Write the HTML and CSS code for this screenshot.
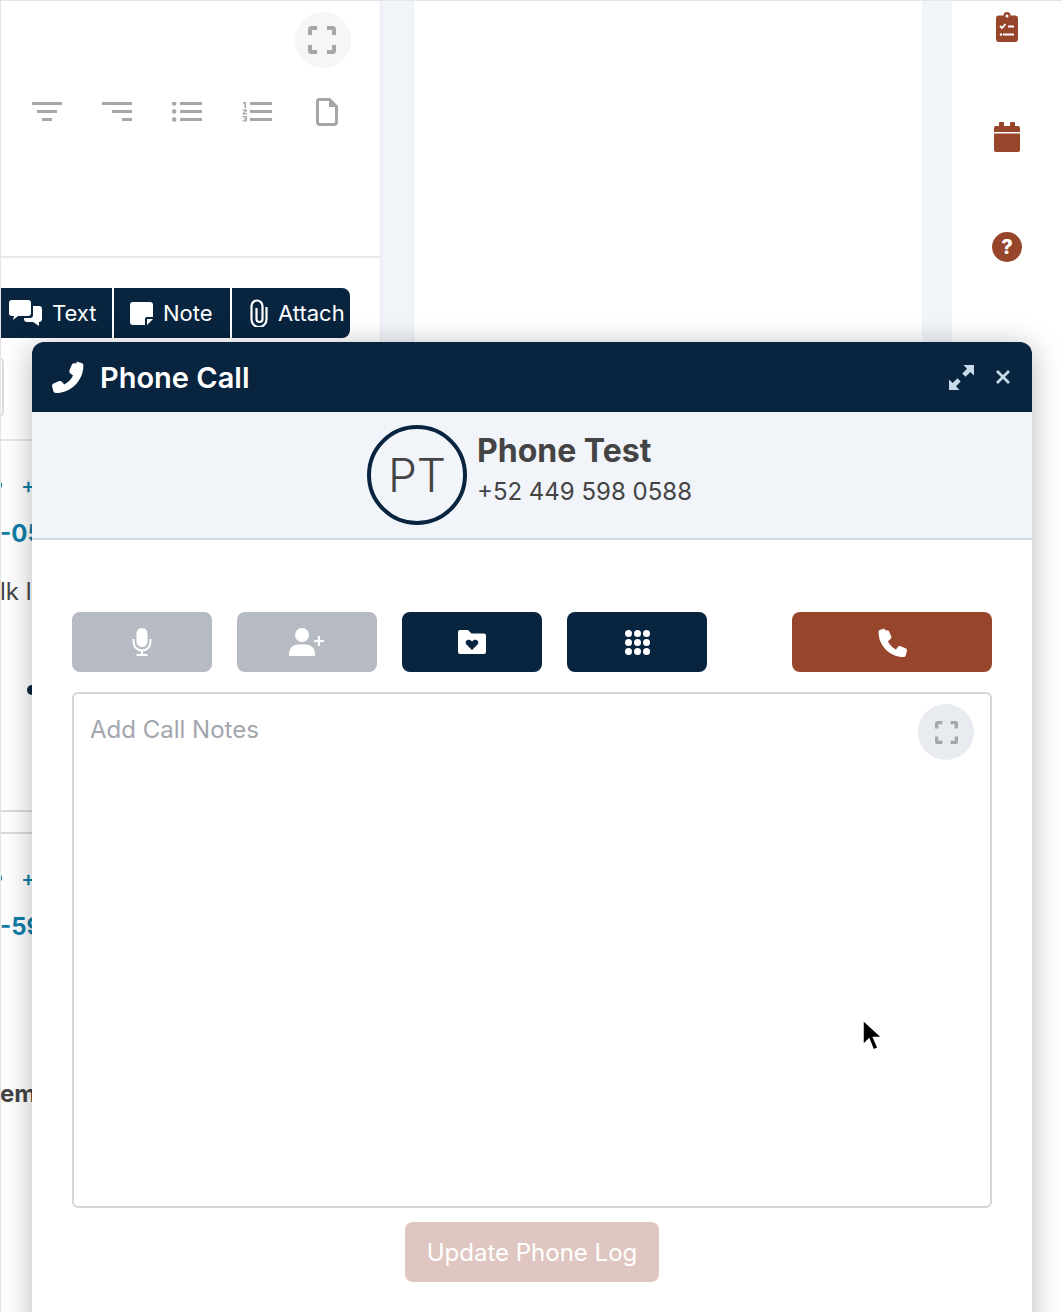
FILE: index.html
```html
<!DOCTYPE html>
<html lang="en">
<head>
<meta charset="utf-8">
<title>Phone Call</title>
<link rel="stylesheet" href="styles.css">
</head>
<body>
<svg class="defs" width="0" height="0" aria-hidden="true">
  <symbol id="i-full" viewBox="0 0 28 28"><path d="M2 9V3.500a1.500 1.500 0 0 1 1.500-1.500H9M19 2h5.500a1.500 1.500 0 0 1 1.500 1.500V9M26 19v5.500a1.500 1.500 0 0 1-1.500 1.500H19M9 26H3.500a1.500 1.500 0 0 1-1.500-1.500V19" fill="none" stroke="currentColor" stroke-width="4"/></symbol>
  <symbol id="i-phone" viewBox="0 0 32 32"><path d="M24.500.6l5 1.300c1.200.3 1.900 1.300 1.900 2.500C31.400 19.500 19 32 3.800 32c-1.200 0-2.200-.8-2.500-2L.1 25.200c-.3-1.100.3-2.300 1.400-2.800l5.600-2.300c1-.4 2.100-.1 2.800.7l2.300 2.800c3.900-1.900 7-5.100 8.800-9l-2.900-2.400c-.8-.7-1.100-1.800-.7-2.800l2.500-5.800c.5-1.600 3.100-1.300 4.600-1z" fill="currentColor"/></symbol>
</svg>
<div class="page">
  <section class="left">
    <div class="editor">
      <button class="full-btn full-top"><svg class="full-ico-top"><use href="#i-full"/></svg></button>
      <div class="tools">
        <svg class="tool" viewBox="0 0 30 20"><path d="M0 0h30v3H0zM5 8h20v3H5zM10 16h10v3H10z"/></svg>
        <svg class="tool" viewBox="0 0 30 20"><path d="M0 0h30v3H0zM10 8h20v3H10zM20 16h10v3H20z"/></svg>
        <svg class="tool" viewBox="0 0 30 20"><circle cx="2.200" cy="1.500" r="2.200"/><circle cx="2.200" cy="9.500" r="2.200"/><circle cx="2.200" cy="17.500" r="2.200"/><path d="M8 0h22v3H8zM8 8h22v3H8zM8 16h22v3H8z"/></svg>
        <svg class="tool" viewBox="0 0 30 20"><path d="M1 0h3v6H2.500V1.400H1zM.5 7.500h4.500v1.300L2.200 11.300h2.800v1.200H.5v-1.200L3.300 8.800H.5zM.5 14h4.500v5.500H.5v-1.200h3v-1H1.500v-1h2v-1h-3zM8 0h22v3H8zM8 8h22v3H8zM8 16h22v3H8z"/></svg>
        <svg class="tool-file" viewBox="0 0 22 28"><path d="M3 1.500h10.500l7 7V24a2.500 2.500 0 0 1-2.500 2.500H3.500A2.500 2.500 0 0 1 1.500 24V3.500a2 2 0 0 1 1.500-2z" fill="none" stroke="#a6a6a6" stroke-width="3"/><path d="M13 1.500l7.500 7.500H13z" fill="#a6a6a6"/></svg>
      </div>
    </div>
    <div class="tabs">
      <button class="tab tab-text"><svg class="ico-comments" viewBox="0 0 33 26"><path d="M3 0h16a3 3 0 0 1 3 3v10a3 3 0 0 1-3 3H9l-5 4 1-4H3a3 3 0 0 1-3-3V3a3 3 0 0 1 3-3z" fill="#fff"/><path d="M24 6h6a3 3 0 0 1 3 3v10a3 3 0 0 1-3 3v4l-6-4h-6a3 3 0 0 1-3-2.500V18h6a3 3 0 0 0 3-3z" fill="#fff"/></svg>Text</button>
      <button class="tab tab-note"><svg class="ico-note" viewBox="0 0 23 23"><path d="M3 0h17a3 3 0 0 1 3 3v12h-6a2 2 0 0 0-2 2v6H3a3 3 0 0 1-3-3V3a3 3 0 0 1 3-3zM17 17h6l-6 6z" fill="#fff"/></svg>Note</button>
      <button class="tab tab-attach"><svg class="ico-clip" viewBox="0 0 20 28"><path d="M17.500 8v12.500a7.500 7.500 0 0 1-15 0V7a5.500 5.500 0 0 1 11 0v13a3 3 0 0 1-6 0V9" fill="none" stroke="#fff" stroke-width="2.200"/></svg>Attach</button>
    </div>
    <div class="filter-box"></div>
    <div class="record rec-one">
      <p class="dial"><span class="dial-mark"></span><span>+</span></p>
      <p class="num">-05</p>
      <p class="snippet">lk l</p>
      <span class="bullet"></span>
    </div>
    <div class="record rec-two">
      <p class="dial"><span class="dial-mark"></span><span>+</span></p>
      <p class="num">-59</p>
      <p class="snippet-bold">em</p>
    </div>
  </section>
  <div class="gutter"></div>
  <main class="center"></main>
  <div class="gutter"></div>
  <nav class="rail">
    <svg class="rail-ico" viewBox="0 0 22 30"><path d="M3 3.500h4.500a3.500 3.500 0 0 1 7 0H19a3 3 0 0 1 3 3V27a3 3 0 0 1-3 3H3a3 3 0 0 1-3-3V6.500a3 3 0 0 1 3-3z" fill="#97452b"/><circle cx="11" cy="4" r="1.500" fill="#fff"/><path d="M4 14l2 2 3.500-4M12 14.500h6M7 22.500h11" fill="none" stroke="#fff" stroke-width="1.800"/><circle cx="5" cy="22.500" r="1.300" fill="#fff"/></svg>
    <svg class="rail-ico rail-cal" viewBox="0 0 26 30"><path d="M6 0h3a1 1 0 0 1 1 1v3h6V1a1 1 0 0 1 1-1h3a1 1 0 0 1 1 1v3h3a2 2 0 0 1 2 2v4H0V6a2 2 0 0 1 2-2h3V1a1 1 0 0 1 1-1zM0 11.500h26V28a2 2 0 0 1-2 2H2a2 2 0 0 1-2-2z" fill="#97452b"/></svg>
    <div class="help">?</div>
  </nav>
</div>

<div class="modal">
  <header class="modal-head">
    <svg class="head-phone"><use href="#i-phone"/></svg>
    <h1 class="modal-title">Phone Call</h1>
    <svg class="head-expand" viewBox="0 0 26 26"><path d="M15 0h11v11l-3.800-3.800-5 5-3.400-3.400 5-5zM11 26H0V15l3.800 3.800 5-5 3.400 3.400-5 5z" fill="#c8dbe8"/></svg>
    <svg class="head-close" viewBox="0 0 16 16"><path d="M2 2l12 12M14 2L2 14" fill="none" stroke="#c8dbe8" stroke-width="2.800"/></svg>
  </header>
  <div class="contact">
    <div class="avatar">PT</div>
    <div class="contact-info">
      <div class="contact-name">Phone Test</div>
      <div class="contact-num">+52 449 598 0588</div>
    </div>
  </div>
  <div class="modal-body">
    <div class="actions">
      <button class="act act-off"><svg class="ico-mic" viewBox="0 0 20 28"><rect x="4.500" y="0" width="11" height="19" rx="5.500" fill="#fff"/><path d="M1.500 11v3a8.500 8.500 0 0 0 17 0v-3" fill="none" stroke="#fff" stroke-width="2"/><path d="M10 22v4M4.500 27h11" stroke="#fff" stroke-width="2.200"/></svg></button>
      <button class="act act-off"><svg class="ico-add" viewBox="0 0 36 28"><circle cx="13" cy="7" r="7" fill="#fff"/><path d="M0 28v-2c0-5.500 4-9.500 9-9.500h8c5 0 9 4 9 9.500v2z" fill="#fff"/><path d="M30 8v10M25 13h10" stroke="#fff" stroke-width="2.200"/></svg></button>
      <button class="act act-on"><svg class="ico-folder" viewBox="0 0 28 24"><path d="M2 0h8l3.500 3.500H26a2 2 0 0 1 2 2V22a2 2 0 0 1-2 2H2a2 2 0 0 1-2-2V2a2 2 0 0 1 2-2z" fill="#fff"/><path d="M14 20l-5.500-5.500c-3-3.500 2.500-7 5.500-3 3-4 8.500-.5 5.500 3z" fill="#08243f"/></svg></button>
      <button class="act act-on"><span class="keypad"><i></i><i></i><i></i><i></i><i></i><i></i><i></i><i></i><i></i></span></button>
      <button class="act act-call"><svg class="ico-call"><use href="#i-phone"/></svg></button>
    </div>
    <div class="notes">
      <textarea class="notes-input" placeholder="Add Call Notes"></textarea>
      <button class="full-btn full-notes"><svg class="full-ico-notes"><use href="#i-full"/></svg></button>
    </div>
    <div class="submit-row"><button class="submit">Update Phone Log</button></div>
  </div>
</div>

<svg class="cursor" viewBox="0 0 22 34"><path d="M1 1v25l6-6 4.500 11 4.500-2-4.500-10.500H20z" fill="#000" stroke="#fff" stroke-width="1.500"/></svg>
</body>
</html>
```
FILE: styles.css
```css
* { box-sizing: border-box; }
html, body { margin: 0; padding: 0; }
body {
  width: 1062px;
  height: 1312px;
  overflow: hidden;
  position: relative;
  background: #fff;
  font-family: "Inter", "Liberation Sans", sans-serif;
  color: #444;
}
button { font-family: inherit; border: 0; padding: 0; cursor: pointer; }
p { margin: 0; }
.defs { position: absolute; }

.page {
  display: grid;
  grid-template-columns: 381px 32px 509px 30px 110px;
  height: 1312px;
  border-top: 1px solid #e2e5ea;
}
.left {
  display: flex;
  flex-direction: column;
  border-left: 1px solid #e4e4e6;
  border-right: 1px solid #e6e9ee;
  overflow: hidden;
  min-width: 0;
}
.editor {
  position: relative;
  height: 257px;
  flex: none;
  border-bottom: 2px solid #e9e9ea;
  padding: 101px 0 0 31px;
}
.tools { display: flex; align-items: flex-start; gap: 40px; }
.tool { width: 30px; height: 20px; fill: #a6a6a6; flex: none; }
.tool-file { width: 22px; height: 28px; margin: -4px 0 0 4px; flex: none; }
.full-btn {
  position: absolute;
  width: 56px;
  height: 56px;
  border-radius: 50%;
  display: flex;
  align-items: center;
  justify-content: center;
}
.full-top { left: 294px; top: 11px; background: #f6f6f6; color: #a6a6a6; }
.full-ico-top { width: 28px; height: 28px; margin-left: -2px; }
.full-notes { right: 18px; top: 12px; background: #e8ebef; color: #a3a6ab; }
.full-ico-notes { width: 23px; height: 23px; }

.tabs { display: flex; gap: 2px; margin: 30px 0 0 -1px; flex: none; }
.tab {
  height: 50px;
  background: #08243f;
  color: #fff;
  font-size: 22px;
  display: flex;
  align-items: center;
}
.tab-text { width: 112px; padding-left: 9px; gap: 10px; }
.tab-note { width: 116px; padding-left: 16px; gap: 10px; }
.tab-attach { width: 118px; padding-left: 17px; gap: 9px; border-radius: 0 8px 8px 0; }
.ico-comments { width: 33px; height: 26px; }
.ico-note { width: 23px; height: 23px; }
.ico-clip { width: 20px; height: 28px; }

.filter-box {
  height: 58px;
  width: 4px;
  margin: 20px 0 0 -1px;
  border: 2px solid #dcdcdc;
  border-left: 0;
  border-radius: 0 5px 5px 0;
  flex: none;
}
.record { white-space: nowrap; flex: none; position: relative; }
.rec-one { margin-top: 23px; height: 373px; border-top: 2px solid #e6e6e6; border-bottom: 2px solid #dcdcdc; }
.rec-two { margin-top: 20px; border-top: 2px solid #dcdcdc; }
.dial {
  color: #0f7ea8;
  font-size: 22px;
  font-weight: 500;
  display: flex;
  align-items: center;
  line-height: 26px;
  padding-top: 31px;
  margin-left: -1px;
}
.dial-mark { width: 2px; height: 6px; background: #0f7ea8; border-radius: 0 3px 3px 0; margin-right: 19px; }
.num { color: #0f7ea8; font-size: 24px; font-weight: 700; line-height: 32px; margin-top: 20px; margin-left: -1px; }
.snippet { font-size: 24px; margin: 27px 0 0 -1px; line-height: 30px; color: #444; }
.bullet { display: block; width: 10px; height: 10px; border-radius: 50%; background: #08243f; margin: 78px 0 0 26px; }
.snippet-bold { font-size: 24px; font-weight: 700; margin: 136px 0 0 -1px; line-height: 30px; color: #444; }

.gutter { background: #f1f5fa; }
.center { background: #fff; border-left: 1px solid #ececef; }
.rail {
  display: flex;
  flex-direction: column;
  align-items: center;
  gap: 80px;
  padding-top: 11px;
}
.rail-ico { width: 22px; height: 30px; }
.rail-cal { width: 26px; }
.help {
  width: 30px;
  height: 30px;
  border-radius: 50%;
  background: #97452b;
  color: #fff;
  font-weight: 800;
  font-size: 20px;
  line-height: 30px;
  text-align: center;
}

.modal {
  position: absolute;
  left: 32px;
  top: 342px;
  width: 1000px;
  height: 990px;
  background: #fff;
  border-radius: 12px 12px 0 0;
  box-shadow: 0 4px 30px rgba(0, 0, 0, .28);
  display: flex;
  flex-direction: column;
}
.modal-head {
  height: 70px;
  flex: none;
  background: #08243f;
  border-radius: 12px 12px 0 0;
  display: flex;
  align-items: center;
  padding: 0 20px;
  color: #fff;
}
.head-phone { width: 32px; height: 32px; }
.modal-title { margin: 0 0 0 16px; font-size: 29px; font-weight: 600; flex: 1; }
.head-expand { width: 25px; height: 25px; margin-right: 21px; }
.head-close { width: 16px; height: 16px; margin-right: 1px; }
.contact {
  height: 128px;
  flex: none;
  background: #f1f5fa;
  border-bottom: 2px solid #cfdbe6;
  display: flex;
  justify-content: center;
  align-items: flex-start;
  gap: 10px;
  padding-top: 13px;
}
.avatar {
  width: 100px;
  height: 100px;
  border-radius: 50%;
  border: 4px solid #08243f;
  font-size: 46px;
  font-weight: 300;
  text-align: center;
  line-height: 92px;
  color: #444;
}
.contact-info { width: 220px; }
.contact-name { font-size: 32px; font-weight: 700; line-height: 40px; margin-top: 6px; }
.contact-num { font-size: 24px; line-height: 32px; margin-top: 5px; }
.modal-body { padding: 72px 40px 0; flex: 1; }
.actions { display: flex; gap: 25px; }
.act {
  width: 140px;
  height: 60px;
  border-radius: 8px;
  display: flex;
  align-items: center;
  justify-content: center;
}
.act-off { background: #b6bbc3; }
.act-on { background: #08243f; }
.act-call { width: 200px; margin-left: 60px; background: #97452b; color: #fff; }
.ico-mic { width: 20px; height: 28px; }
.ico-add { width: 36px; height: 28px; }
.ico-folder { width: 28px; height: 24px; }
.ico-call { width: 29px; height: 29px; transform: scaleX(-1); }
.keypad { display: grid; grid-template-columns: repeat(3, 7px); gap: 2px; }
.keypad i { width: 7px; height: 7px; border-radius: 50%; background: #fff; display: block; }
.notes { position: relative; height: 516px; margin-top: 20px; }
.notes-input {
  display: block;
  width: 100%;
  height: 100%;
  border: 2px solid #d5d5dc;
  border-radius: 6px;
  padding: 21px 16px;
  font-family: inherit;
  font-size: 24px;
  line-height: 30px;
  resize: none;
  background: #fff;
  outline: none;
}
.notes-input::placeholder { color: #a2a6ad; opacity: 1; }
.submit-row { display: flex; justify-content: center; margin-top: 14px; }
.submit {
  width: 254px;
  height: 60px;
  border-radius: 8px;
  background: #e0c6c1;
  color: #fff;
  font-size: 24px;
}
.cursor { position: absolute; left: 862px; top: 1019px; width: 22px; height: 34px; }
```
